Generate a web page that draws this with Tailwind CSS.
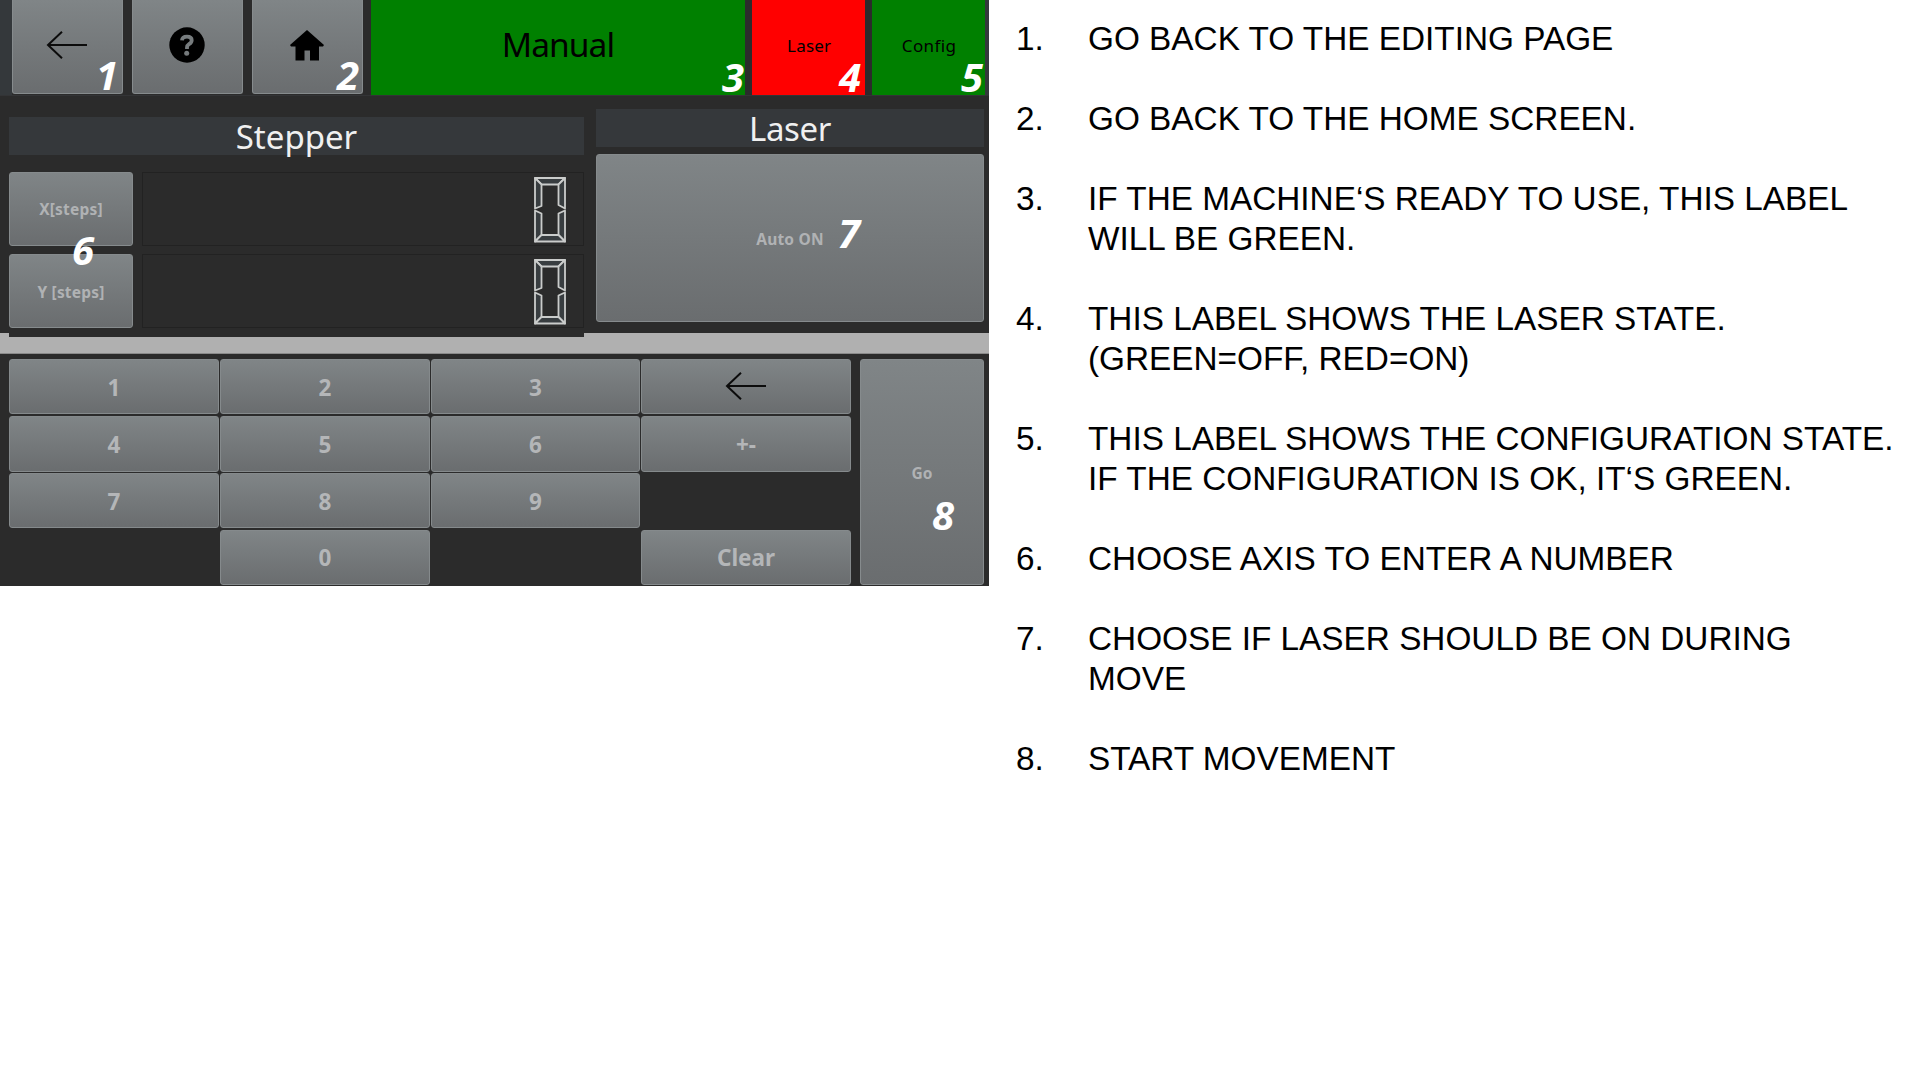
<!DOCTYPE html>
<html lang="en">
<head>
<meta charset="utf-8">
<title>Manual control</title>
<script src="https://cdn.jsdelivr.net/npm/@tailwindcss/browser@4"></script>
</head>
<body class="flex h-[1080px] w-[1920px] items-start overflow-hidden bg-white">
<main class="relative h-[586px] w-[989px] shrink-0 bg-[#2b2b2b] font-['Noto_Sans',sans-serif]">
  <header class="flex h-[96px] border-b border-[#333436]">
    <div class="w-[12px] bg-[#34383b]"></div>
    <button class="flex h-[94px] w-[111px] items-center justify-center rounded-b-[3px] border border-t-0 border-[#868b8d] bg-linear-to-b from-[#808587] to-[#6a6d6f]">
      <svg class="-mt-[4px] h-[28px] w-[42px]" viewBox="0 0 42 28" fill="none" stroke="#0c0c0c" stroke-width="2"><path d="M41 14H2M16 .8L2 14L16 27.2"/></svg>
    </button>
    <button class="ml-[9px] flex h-[94px] w-[111px] items-center justify-center rounded-b-[3px] border border-t-0 border-[#868b8d] bg-linear-to-b from-[#808587] to-[#6a6d6f]">
      <svg class="-mt-[3px] h-[36px] w-[36px]" viewBox="0 0 36 36"><circle cx="18" cy="18" r="17.7"/><path d="M13 13.4Q13.2 9.600 18 9.600Q22.700 9.600 22.700 13.2Q22.700 15.5 20 17.2Q18 18.5 18 20.600V22" fill="none" stroke="#777c7e" stroke-width="3.8"/><circle cx="17.7" cy="26.3" r="2.5" fill="#757a7c"/></svg>
    </button>
    <button class="ml-[9px] flex h-[94px] w-[111px] items-center justify-center rounded-b-[3px] border border-t-0 border-[#868b8d] bg-linear-to-b from-[#808587] to-[#6a6d6f]">
      <svg class="-mt-[3px] h-[31px] w-[34px]" viewBox="0 0 34 31"><path d="M17 0L34 15L33 16.6H29V30.5H20V20.5H14.5V30.5H5.5V16.6H1L0 15Z"/></svg>
    </button>
    <div class="ml-[8px] flex h-[95px] w-[375px] items-center justify-center bg-[#008000] pb-[6px] text-[33.5px] tracking-[-0.9px]">Manual</div>
    <div class="ml-[7px] flex h-[95px] w-[113px] items-center justify-center bg-[#ff0000] pb-[4px] pl-[1px] text-[17px] tracking-[0.2px]">Laser</div>
    <div class="ml-[7px] flex h-[95px] w-[113px] items-center justify-center bg-[#008000] pb-[4px] pl-[1px] text-[17px] tracking-[0.4px]">Config</div>
    <div class="h-[95px] w-[4px] bg-[#35383c]"></div>
  </header>

  <div class="flex h-[237px] pl-[9px]">
    <section class="w-[575px] pt-[21px]">
      <h2 class="flex h-[38px] items-center justify-center bg-[#35383b] pt-[2px] text-[33px] text-[#f0f0f0]">Stepper</h2>
      <div class="mt-[17px] flex gap-[9px]">
        <button class="h-[74px] w-[124px] rounded-[3px] border border-[#868b8d] bg-linear-to-b from-[#808587] to-[#6a6d6f] pt-[2px] text-[15.5px] font-bold tracking-[0.2px] text-[#b0b2b4]">X[steps]</button>
        <div class="flex h-[74px] w-[442px] justify-end border border-[#222] pt-[4px] pr-[16px]">
          <svg class="h-[66px] w-[34px]" viewBox="0 0 34 66" fill="#383d40" stroke="#cacccb" stroke-width="1.8" stroke-linejoin="round"><path d="M2 1H32L25.5 7.500H8.500Z"/><path d="M2 1L8.500 7.500V29L2 31.500Z"/><path d="M32 1L25.500 7.500V28L32 31.500Z"/><path d="M2 33.500L8.500 36.500V58L2 64.500Z"/><path d="M32 33.500L25.500 36.500V58L32 64.500Z"/><path d="M8.500 58H25.500L32 64.500H2Z"/></svg>
        </div>
      </div>
      <div class="mt-[8px] flex gap-[9px]">
        <button class="h-[74px] w-[124px] rounded-[3px] border border-[#868b8d] bg-linear-to-b from-[#808587] to-[#6a6d6f] pt-[3px] text-[15.5px] font-bold tracking-[0.2px] text-[#b0b2b4]">Y [steps]</button>
        <div class="flex h-[74px] w-[442px] justify-end border border-[#222] pt-[4px] pr-[16px]">
          <svg class="h-[66px] w-[34px]" viewBox="0 0 34 66" fill="#383d40" stroke="#cacccb" stroke-width="1.8" stroke-linejoin="round"><path d="M2 1H32L25.5 7.500H8.500Z"/><path d="M2 1L8.500 7.500V29L2 31.500Z"/><path d="M32 1L25.500 7.500V28L32 31.500Z"/><path d="M2 33.500L8.500 36.500V58L2 64.500Z"/><path d="M32 33.500L25.500 36.500V58L32 64.500Z"/><path d="M8.500 58H25.500L32 64.500H2Z"/></svg>
        </div>
      </div>
    </section>
    <section class="ml-[12px] w-[388px] pt-[12.5px]">
      <h2 class="flex h-[38px] items-center justify-center bg-[#35383b] pt-[2px] text-[33px] tracking-[-0.4px] text-[#f0f0f0]">Laser</h2>
      <button class="mt-[7.5px] h-[168px] w-[388px] rounded-[3px] border border-[#868b8d] bg-linear-to-b from-[#808587] to-[#6a6d6f] pt-[4px] text-[15.5px] font-bold tracking-[0.2px] text-[#b0b2b4]">Auto ON</button>
    </section>
  </div>

  <div class="h-[21px] border-b border-[#8a8a8a] bg-[#b0b0b0] pl-[9px]"><div class="h-[4px] w-[575px] bg-[#2b2b2b]"></div></div>

  <div class="flex gap-[9px] pt-[5px] pl-[9px]">
    <div class="grid h-[226px] w-[842px] grid-cols-[210px_210px_209px_210px] grid-rows-[55px_56px_55px_55px] gap-x-px gap-y-[1.5px] [&>button]:rounded-[3px] [&>button]:border [&>button]:border-[#858a8c] [&>button]:bg-linear-to-b [&>button]:from-[#808587] [&>button]:to-[#6a6d6f] [&>button]:pt-[2px] [&>button]:text-[22.5px] [&>button]:font-bold [&>button]:text-[#b4b6b8]">
      <button>1</button><button>2</button><button>3</button>
      <button class="flex items-center justify-center"><svg class="-mt-[4px] -ml-[1px] h-[28px] w-[42px]" viewBox="0 0 42 28" fill="none" stroke="#0c0c0c" stroke-width="2"><path d="M41 14H2M16 .8L2 14L16 27.2"/></svg></button>
      <button>4</button><button>5</button><button>6</button><button>+-</button>
      <button>7</button><button>8</button><button>9</button><span></span>
      <span></span><button>0</button><span></span><button>Clear</button>
    </div>
    <button class="h-[226px] w-[124px] rounded-[3px] border border-[#868b8d] bg-linear-to-b from-[#808587] to-[#6a6d6f] pt-[3px] text-[15.5px] font-bold text-[#b0b2b4]">Go</button>
  </div>

  <!-- Callout numbers laid over the controls -->
  <div class="font-['Open_Sans',sans-serif] text-[40px] leading-[40px] font-bold text-white italic">
    <span class="absolute top-[55px] left-[96px]">1</span>
    <span class="absolute top-[55px] left-[337px]">2</span>
    <span class="absolute top-[57px] left-[722px]">3</span>
    <span class="absolute top-[57px] left-[839px]">4</span>
    <span class="absolute top-[57px] left-[961px]">5</span>
    <span class="absolute top-[230px] left-[72px]">6</span>
    <span class="absolute top-[213px] left-[838px]">7</span>
    <span class="absolute top-[495px] left-[932px]">8</span>
  </div>
</main>

<ol class="ml-[27px] flex w-[900px] flex-col gap-[40px] pt-[19px] font-['Liberation_Sans',Arial,sans-serif] text-[33.33px] leading-[40px] text-black">
  <li class="flex"><span class="w-[72px]">1.</span><p>GO BACK TO THE EDITING PAGE</p></li>
  <li class="flex"><span class="w-[72px]">2.</span><p>GO BACK TO THE HOME SCREEN.</p></li>
  <li class="flex"><span class="w-[72px]">3.</span><p>IF THE MACHINE‘S READY TO USE, THIS LABEL<br>WILL BE GREEN.</p></li>
  <li class="flex"><span class="w-[72px]">4.</span><p>THIS LABEL SHOWS THE LASER STATE.<br>(GREEN=OFF, RED=ON)</p></li>
  <li class="flex"><span class="w-[72px]">5.</span><p class="whitespace-nowrap">THIS LABEL SHOWS THE CONFIGURATION STATE.<br>IF THE CONFIGURATION IS OK, IT‘S GREEN.</p></li>
  <li class="flex"><span class="w-[72px]">6.</span><p>CHOOSE AXIS TO ENTER A NUMBER</p></li>
  <li class="flex"><span class="w-[72px]">7.</span><p>CHOOSE IF LASER SHOULD BE ON DURING<br>MOVE</p></li>
  <li class="flex"><span class="w-[72px]">8.</span><p>START MOVEMENT</p></li>
</ol>
</body>
</html>
